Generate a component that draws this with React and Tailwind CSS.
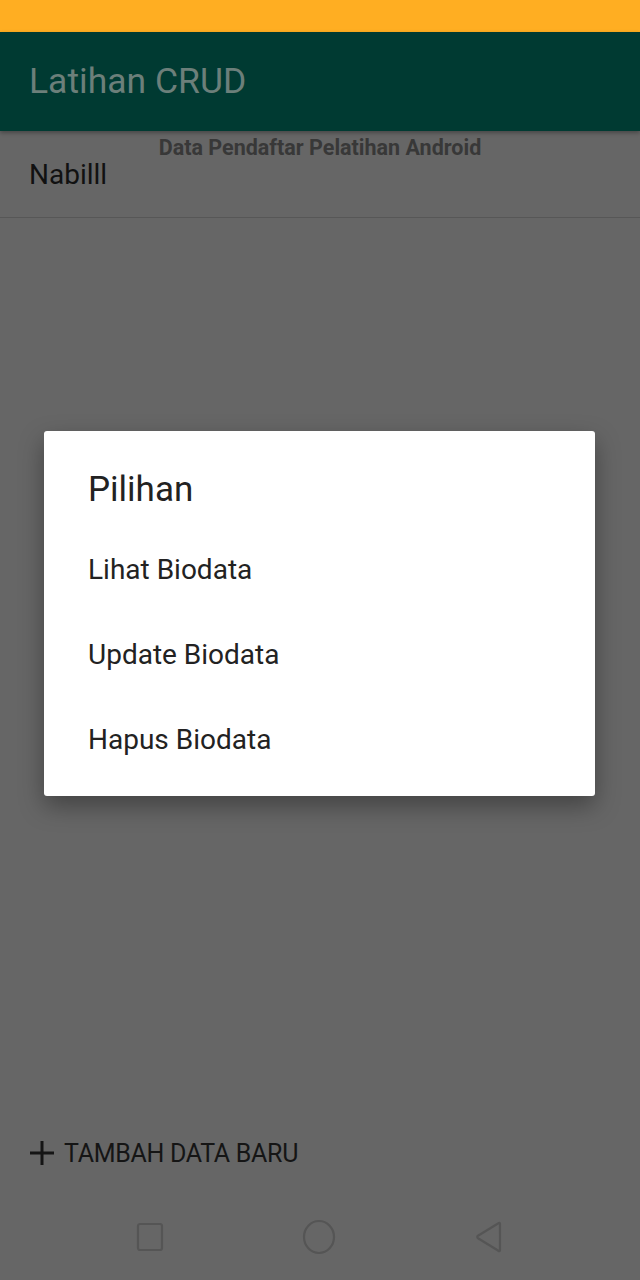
export default function App() {
  const font = { fontFamily: 'Roboto, "Noto Sans", sans-serif' };
  return (
    <div className="relative w-[640px] h-[1280px] overflow-hidden bg-[#666666] flex flex-col" style={font}>
      <div className="h-[32px] bg-[#ffae22] shrink-0" />
      <div className="h-[99px] bg-[#003a32] shrink-0 flex items-center pl-[29px] shadow-[0_2px_4px_rgba(0,0,0,0.3)] z-10">
        <span className="text-[35.5px] text-[#6c7f7a] leading-none">Latihan CRUD</span>
      </div>
      <div className="flex-1 flex flex-col">
        <div className="text-center text-[21.5px] font-bold text-[#383838] leading-none pt-[6px] h-[27px]">Data Pendaftar Pelatihan Android</div>
        <div className="h-[60px] flex items-start pt-[3px] pl-[29px] border-b border-[#575757]">
          <span className="text-[28px] text-[#111111] leading-none">Nabilll</span>
        </div>
      </div>
      <div className="h-[60px] flex items-center pl-[29px] gap-[9px] text-[#151515] mb-[11px]">
        <svg width="26" height="26" viewBox="0 0 26 26"><path d="M13 1v24M1 13h24" stroke="#151515" strokeWidth="3" /></svg>
        <span className="text-[25px] leading-none tracking-[-0.3px]">TAMBAH DATA BARU</span>
      </div>
      <div className="h-[86px] flex items-center justify-between px-[136px]">
        <svg width="28" height="30" viewBox="0 0 28 30"><rect x="2" y="2" width="24" height="26" rx="2" fill="none" stroke="#555" strokeWidth="2.2" /></svg>
        <svg width="34" height="36" viewBox="0 0 34 36"><ellipse cx="17" cy="18" rx="15" ry="16" fill="none" stroke="#555" strokeWidth="2.2" /></svg>
        <svg width="30" height="32" viewBox="0 0 30 32"><path d="M26 3 L26 29 Q26 31 24 29.5 L4 17.3 Q2.5 16 4 14.7 L24 2.5 Q26 1 26 3Z" fill="none" stroke="#555" strokeWidth="2.2" strokeLinejoin="round" /></svg>
      </div>

      <div className="absolute left-[44px] top-[431px] w-[551px] h-[365px] bg-white rounded-[3px] shadow-[0_10px_24px_rgba(0,0,0,0.35)] flex flex-col pl-[44px] pt-[38px]">
        <div className="h-[40px] flex items-center">
          <span className="text-[35px] text-[#222] leading-none">Pilihan</span>
        </div>
        <div className="flex flex-col mt-[18px]">
          {["Lihat Biodata", "Update Biodata", "Hapus Biodata"].map((t) => (
            <div key={t} className="h-[85px] flex items-center">
              <span className="text-[28px] text-[#222] leading-none">{t}</span>
            </div>
          ))}
        </div>
      </div>
    </div>
  );
}
